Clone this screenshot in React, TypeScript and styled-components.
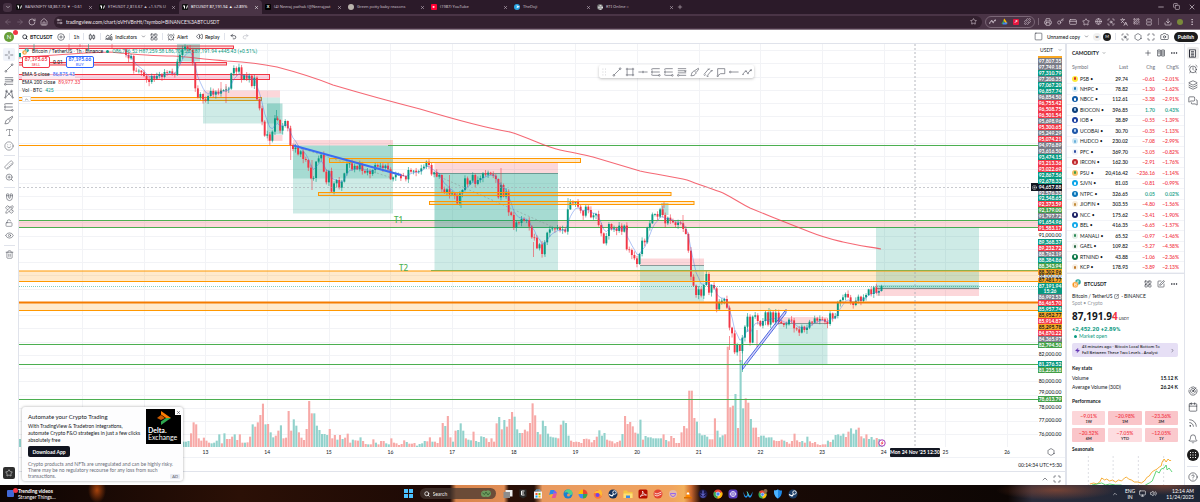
import React from 'react';
import styled, { createGlobalStyle, css } from 'styled-components';
import {
  AlarmClock, ArrowLeft, ArrowRight, Bell, Calendar, Camera, ChevronDown, ChevronRight, ChevronUp, CirclePlus,
  CircleHelp, CreditCard, Download, Ellipsis, EllipsisVertical, Eye, Hexagon, House, Key, Languages,
  Layers, LayoutGrid, LockOpen, Magnet, Maximize, MessagesSquare, Minus, PencilRuler, Plus, Puzzle, QrCode, Radar, Redo2,
  Rewind, RotateCw, Rss, Ruler, Search, Settings2, Smile, Square, SquareArrowOutUpRight, SquarePen, Star, Trash2, Type, Undo2,
  Volume2, X, ZoomIn, Zap, Globe, Printer, SquareSplitVertical, Copy, Monitor, ScanSearch,
} from 'lucide-react';

const UP = '#089981';
const DOWN = '#f23645';
const INK = '#131722';

const GlobalStyle = createGlobalStyle`
  * { box-sizing: border-box; }
  body { margin: 0; background: #fff; }
  body, button, input, table { font: 5px/6px Lato, Roboto, "Noto Sans", sans-serif; color: ${INK}; }
  button { background: none; border: 0; padding: 0; }
  svg { display: block; flex: none; }
  a { color: inherit; text-decoration: none; }
  h2, h3, p { margin: 0; }
`;

const Page = styled.div`
  min-height: 100vh;
  display: flex;
  flex-direction: column;
`;

/* ---------- browser chrome ---------- */

const TabStrip = styled.div`
  height: 14px;
  padding-left: 3px;
  display: flex;
  align-items: center;
  background: #2b1a29;
  color: #ddd0da;
`;

const TabMenu = styled.button`
  width: 9px;
  height: 9px;
  margin-right: 1px;
  border-radius: 3px;
  display: grid;
  place-items: center;
  background: #453142;
  color: #eee;
`;

const Tab = styled.button<{ $active?: boolean }>`
  width: 83px;
  height: 14px;
  padding: 0 3px;
  display: flex;
  align-items: center;
  gap: 3px;
  border-radius: 4px 4px 0 0;
  color: ${p => (p.$active ? '#fff' : '#cfc2cc')};
  background: ${p => (p.$active ? '#4a3446' : 'transparent')};
`;

const TabTitle = styled.span`
  flex: 1;
  min-width: 0;
  white-space: nowrap;
  text-align: left;
  font: 4px/6px "Noto Sans", sans-serif;
`;

const Favicon = styled.span<{ $bg: string; $round?: boolean }>`
  width: 6px;
  height: 6px;
  flex: none;
  display: grid;
  place-items: center;
  border-radius: ${p => (p.$round ? '50%' : '1px')};
  background: ${p => p.$bg};
  color: #fff;
  font-size: 4px;
  font-weight: 700;
`;

const Spacer = styled.div`
  flex: 1;
`;

const WindowButtons = styled.div`
  display: flex;
  gap: 8px;
  padding-right: 4px;
`;

const AddressRow = styled.div`
  height: 16px;
  padding: 0 4px;
  display: flex;
  align-items: center;
  background: #4a3446;
  color: #ddd0da;
  border-bottom: 1px solid #8a7a86;
`;

const NavButtons = styled.div`
  display: flex;
  gap: 4px;
  width: 50px;
`;

const UrlPill = styled.div`
  flex: 1;
  height: 12px;
  padding: 0 5px 0 2px;
  display: flex;
  align-items: center;
  gap: 3px;
  border-radius: 6px;
  background: #33202f;
`;

const UrlInput = styled.input`
  flex: 1;
  min-width: 0;
  padding: 0;
  border: 0;
  background: none;
  color: #eee5ec;
  outline: 0;
`;

const Pinned = styled.div`
  height: 12px;
  margin: 0 3px 0 3px;
  padding: 0 3px;
  display: flex;
  align-items: center;
  gap: 5px;
  border: 1px solid #7a6676;
  border-radius: 6px;
`;

const Extensions = styled.div`
  display: flex;
  align-items: center;
  gap: 5px;
`;

const Divider = styled.span<{ $color?: string }>`
  width: 1px;
  height: 7px;
  flex: none;
  background: ${p => p.$color || '#e0e3eb'};
`;

/* ---------- chart top bar ---------- */

const TopBar = styled.header`
  height: 14px;
  padding: 0 2px 0 4px;
  display: flex;
  align-items: center;
  background: #fff;
  border-bottom: 1px solid #e0e3eb;
`;

const TopGroup = styled.div<{ $gap: number }>`
  margin-right: 4px;
  display: flex;
  align-items: center;
  gap: ${p => p.$gap}px;
  &:last-child { margin-right: 0; }
`;

const BarButton = styled.button<{ $strong?: boolean; $muted?: boolean }>`
  display: flex;
  align-items: center;
  gap: 2px;
  font-weight: ${p => (p.$strong ? 700 : 500)};
  color: ${p => (p.$muted ? '#b2b5be' : INK)};
  white-space: nowrap;
`;

const Avatar = styled.button`
  position: relative;
  width: 10px;
  height: 10px;
  margin-right: 8px;
  border-radius: 50%;
  background: #689f38;
  color: #fff;
  font-size: 6px;
`;

const Badge = styled.span`
  position: absolute;
  top: -2px;
  right: -4px;
  width: 5px;
  height: 5px;
  border-radius: 50%;
  background: ${DOWN};
`;

const Dot = styled.span<{ $dark?: boolean }>`
  width: 8px;
  height: 8px;
  display: grid;
  place-items: center;
  border-radius: 50%;
  font-size: 4px;
  background: ${p => (p.$dark ? '#1c1c1c' : '#f0f0f0')};
  color: ${p => (p.$dark ? '#fff' : '#333')};
`;

const Publish = styled.button`
  width: 24px;
  height: 10px;
  border-radius: 5px;
  background: #1c1c1c;
  color: #fff;
  font-weight: 700;
`;

/* ---------- workspace ---------- */

const Workspace = styled.main`
  flex: 1;
  display: flex;
`;

const ToolRail = styled.nav`
  width: 19px;
  padding: 4px 0 6px;
  display: flex;
  flex-direction: column;
  align-items: center;
  border-right: 1px solid #e0e3eb;
`;

const Tool = styled.button<{ $active?: boolean }>`
  width: 12px;
  height: 13px;
  flex: none;
  display: grid;
  place-items: center;
  border-radius: 2px;
  color: #50535e;
  ${p => p.$active && css`background: #f0f3fa;`}
`;

const RailRule = styled.hr`
  width: 11px;
  height: 1px;
  flex: none;
  margin: 3px 0 2px;
  border: 0;
  background: #e0e3eb;
`;

const StarButton = styled.button`
  width: 12px;
  height: 12px;
  margin-top: auto;
  border-radius: 2px;
  display: grid;
  place-items: center;
  background: #2e2e2e;
  color: #fff;
`;

const ChartColumn = styled.section`
  flex: 1;
  min-width: 0;
  position: relative;
  display: flex;
  flex-direction: column;
  border-right: 2px solid #e0e3eb;
`;

const PlotRow = styled.div`
  display: flex;
  height: 413px;
`;

const Plot = styled.div`
  flex: 1;
  min-width: 0;
  position: relative;
  overflow: hidden;
`;

const PlotSvg = styled.svg`
  width: 100%;
  height: 413px;
  font-family: Lato, Roboto, sans-serif;
`;

const Axis = styled.div`
  width: 27px;
  display: flex;
  flex-direction: column;
`;

const Currency = styled.button`
  width: 24px;
  height: 12px;
  display: flex;
  align-items: center;
  justify-content: space-between;
  padding: 0 0 0 2px;
`;

const Price = styled.span<{ $bg?: string; $h: number; $dark?: boolean }>`
  width: 24px;
  height: ${p => p.$h}px;
  flex: none;
  display: flex;
  flex-direction: column;
  align-items: center;
  justify-content: center;
  line-height: 5px;
  font-weight: ${p => (p.$bg ? 700 : 500)};
  color: ${p => (p.$bg && !p.$dark ? '#fff' : INK)};
  background: ${p => p.$bg || 'transparent'};
`;

const AxisGear = styled.button`
  margin: auto 9px 1px;
`;

const ClockRow = styled.div`
  height: 15px;
  padding-right: 3px;
  display: flex;
  align-items: center;
  justify-content: flex-end;
  border-top: 1px solid #f0f2f6;
  border-bottom: 1px solid #e0e3eb;
`;

const PanelRow = styled.div`
  flex: 1;
  min-height: 13px;
  padding-right: 4px;
  display: flex;
  align-items: center;
  justify-content: flex-end;
  gap: 4px;
`;

/* ---------- overlays on the plot ---------- */

const Legend = styled.div`
  position: absolute;
  left: 3px;
  top: 3px;
  display: flex;
  flex-direction: column;
  align-items: flex-start;
  font-family: Roboto, sans-serif;
`;

const LegendRow = styled.div<{ $h: number; $veil?: boolean }>`
  height: ${p => p.$h}px;
  display: flex;
  align-items: center;
  gap: 3px;
  white-space: nowrap;
  background: ${p => (p.$veil ? 'rgba(255, 255, 255, 0.6)' : 'none')};
`;

const Tinted = styled.span<{ $color: string }>`
  color: ${p => p.$color};
`;

const Quote = styled.button<{ $color: string }>`
  width: 28px;
  height: 12px;
  border: 1px solid ${p => p.$color};
  border-radius: 2px;
  background: #fff;
  color: ${p => p.$color};
  font-weight: 700;
  line-height: 5px;
`;

const Side = styled.span`
  display: block;
  font-size: 4px;
  font-weight: 400;
`;

const Collapse = styled.button`
  width: 9px;
  height: 6px;
  border: 1px solid #e0e3eb;
  border-radius: 1px;
  background: #fff;
  display: grid;
  place-items: center;
`;

const FloatBar = styled.div`
  position: absolute;
  right: 284px;
  top: 21px;
  height: 13px;
  padding-right: 2px;
  display: flex;
  align-items: center;
  gap: 3px;
  border-radius: 2px;
  background: #fff;
  color: #50535e;
  box-shadow: 0 1px 3px rgba(0, 0, 0, 0.25);
`;

const CrossAdd = styled.button`
  position: absolute;
  right: 0;
  top: 139px;
  width: 7px;
  height: 8px;
  background: ${INK};
  color: #fff;
  display: grid;
  place-items: center;
`;

const AdCard = styled.aside`
  position: absolute;
  left: 3px;
  bottom: 4px;
  width: 161px;
  height: 74px;
  padding: 2px 2px 2px 6px;
  display: flex;
  flex-direction: column;
  border-radius: 3px;
  background: #fdfdfe;
  box-shadow: 0 0 3px rgba(0, 0, 0, 0.35);
`;

const AdTop = styled.div`
  display: flex;
  justify-content: space-between;
`;

const AdTitle = styled.h2`
  padding-top: 4px;
  margin-bottom: 3px;
  font-size: 6px;
  line-height: 7px;
  font-weight: 400;
`;

const AdText = styled.p<{ $muted?: boolean }>`
  line-height: ${p => (p.$muted ? 6 : 7)}px;
  color: ${p => (p.$muted ? '#6a6d78' : INK)};
  white-space: nowrap;
`;

const DownloadButton = styled.button`
  width: 42px;
  height: 11px;
  margin: 2px 0 4px;
  flex: none;
  border-radius: 2px;
  background: #10131f;
  color: #fff;
  font-weight: 700;
`;

const AdLogo = styled.div`
  position: relative;
  width: 35px;
  height: 35px;
  padding: 1px 2px;
  display: flex;
  flex-direction: column;
  background: #000;
  color: #fff;
  font-size: 7px;
  line-height: 7px;
`;

const AdLogoMark = styled.svg`
  align-self: center;
  margin-bottom: 1px;
`;

const AdClose = styled.button`
  position: absolute;
  top: 0;
  right: 0;
  width: 6px;
  height: 6px;
  display: grid;
  place-items: center;
  background: #fff;
`;

const AdTag = styled.span`
  position: absolute;
  right: 3px;
  bottom: 2px;
  padding: 0 2px;
  border-radius: 1px;
  background: #e8ebf3;
  color: #50535e;
  font-size: 4px;
  line-height: 5px;
`;

/* ---------- watch list and details ---------- */

const SidePanel = styled.aside`
  width: 118px;
  display: flex;
  flex-direction: column;
  border-right: 1px solid #e0e3eb;
`;

const PanelHead = styled.div`
  height: 18px;
  padding: 0 6px 0 5px;
  display: flex;
  align-items: center;
  gap: 5px;
`;

const PanelTitle = styled.h2`
  flex: 1;
  display: flex;
  align-items: center;
  gap: 3px;
  font-size: 5px;
  font-weight: 700;
`;

const WatchTable = styled.table`
  width: 100%;
  height: 211px;
  table-layout: fixed;
  border-collapse: collapse;
`;

const HeadCell = styled.th<{ $w?: number; $left?: boolean }>`
  width: ${p => (p.$w ? `${p.$w}px` : 'auto')};
  height: 12px;
  padding: 0 0 2px ${p => (p.$left ? 5 : 0)}px;
  text-align: ${p => (p.$left ? 'left' : 'right')};
  font-weight: 400;
  color: #6a6d78;
  &:last-child { padding-right: 5px; }
`;

const Cell = styled.td<{ $color?: string }>`
  padding: 0;
  text-align: right;
  font-weight: 600;
  color: ${p => p.$color || INK};
  white-space: nowrap;
  border-bottom: 1px solid #f3f4f8;
  &:last-child { padding-right: 5px; }
`;

const NameCell = styled.td`
  padding: 0 0 0 5px;
  border-bottom: 1px solid #f3f4f8;
`;

const NameWrap = styled.span`
  display: flex;
  align-items: center;
  gap: 2px;
  white-space: nowrap;
`;

const Coin = styled.span<{ $bg: string; $fg: string }>`
  width: 6px;
  height: 6px;
  flex: none;
  border-radius: 50%;
  display: grid;
  place-items: center;
  background: ${p => p.$bg};
  &::after {
    content: '';
    width: 2px;
    height: 3px;
    border-radius: 1px;
    background: ${p => p.$fg};
  }
`;

const Details = styled.section`
  padding: 0 6px 0 5px;
  border-top: 1px solid #e0e3eb;
  flex: 1;
  display: flex;
  flex-direction: column;
`;

const DetailHead = styled.div`
  height: 19px;
  display: flex;
  align-items: center;
  gap: 5px;
`;

const Line = styled.div<{ $h: number; $muted?: boolean }>`
  height: ${p => p.$h}px;
  display: flex;
  align-items: center;
  gap: 2px;
  white-space: nowrap;
  color: ${p => (p.$muted ? '#9598a1' : INK)};
`;

const BigPrice = styled.div`
  height: 18px;
  display: flex;
  align-items: center;
  font: 700 10px/18px "Noto Sans", sans-serif;
`;

const Unit = styled.span`
  margin: 5px 0 0 1px;
  font: 4px/5px Lato, sans-serif;
`;

const Change = styled.div`
  height: 7px;
  color: ${UP};
  font: 700 6px/7px Roboto, sans-serif;
`;

const Open = styled.div`
  height: 8px;
  padding-left: 2px;
  display: flex;
  align-items: center;
  gap: 2px;
  color: ${UP};
`;

const OpenDot = styled.span`
  width: 3px;
  height: 3px;
  border-radius: 50%;
  background: ${UP};
`;

const News = styled.a`
  height: 14px;
  margin: 3px 0 7px;
  padding: 0 3px;
  display: flex;
  align-items: center;
  gap: 2px;
  border-radius: 2px;
  background: #e6dff5;
  white-space: nowrap;
`;

const NewsText = styled.span`
  flex: 1;
  font: 500 4px/6px "Noto Sans", sans-serif;
`;

const SubTitle = styled.h3<{ $h: number }>`
  font-size: 5px;
  line-height: ${p => p.$h}px;
  font-weight: 700;
`;

const Stat = styled.div`
  height: 9px;
  display: flex;
  align-items: center;
  justify-content: space-between;
`;

const PerfGrid = styled.div`
  display: grid;
  grid-template-columns: repeat(3, 1fr);
  grid-auto-rows: 14px;
  gap: 3px;
`;

const PerfCell = styled.div<{ $bg: string }>`
  display: flex;
  flex-direction: column;
  align-items: center;
  justify-content: center;
  border-radius: 1px;
  background: ${p => p.$bg};
  color: ${DOWN};
  font-weight: 600;
`;

const Period = styled.span`
  color: ${INK};
  font-size: 4px;
  line-height: 5px;
`;

const IconRail = styled.nav`
  width: 15px;
  padding-top: 3px;
  display: flex;
  flex-direction: column;
  align-items: center;
  color: #50535e;
`;

const RailButton = styled.button<{ $tone?: 'on' | 'dark' }>`
  width: 12px;
  height: ${p => (p.$tone ? 12 : 16)}px;
  margin: ${p => (p.$tone ? 2 : 0)}px 0;
  flex: none;
  display: grid;
  place-items: center;
  border-radius: ${p => (p.$tone === 'dark' ? '50%' : '2px')};
  ${p => p.$tone === 'on' && css`background: #ebebeb; margin-top: 0;`}
  ${p => p.$tone === 'dark' && css`background: #1c1c1c; color: #fff;`}
`;

/* ---------- taskbar ---------- */

const Taskbar = styled.footer`
  height: 17px;
  padding: 0 6px 0 7px;
  display: grid;
  grid-template-columns: 1fr auto 1fr;
  align-items: center;
  color: #fff;
  background:
    radial-gradient(ellipse 9px 13px at 97px 5px, #a8430c, transparent),
    radial-gradient(ellipse 60px 10px at 88% 30%, rgba(190, 90, 50, 0.5), transparent),
    radial-gradient(ellipse 40px 10px at 97% 0, rgba(190, 90, 50, 0.5), transparent),
    linear-gradient(90deg, #0c0403 0, #2b1006 20%, #1c0905 37.5%, #d9854c 38%, #e08d55 42%, #2a0f06 42.4%, #241009 44.5%,
      #e8995f 45.2%, #f0a45f 56%, #f2b05c 57%, #c9662e 57.6%, #1c0b06 58.4%, #0d0604 84%, #2a2b3a 86%, #1d2636 100%);
`;

const TaskApps = styled.div`
  display: flex;
  align-items: center;
  gap: 5px;
`;

const TaskSearch = styled.label`
  width: 76px;
  height: 11px;
  margin: 0 2px;
  padding: 0 4px;
  display: flex;
  align-items: center;
  gap: 3px;
  border-radius: 6px;
  background: rgba(70, 55, 48, 0.75);
`;

const SearchInput = styled.input`
  width: 40px;
  flex: 1;
  padding: 0;
  border: 0;
  background: none;
  color: #fff;
  outline: 0;
  &::placeholder { color: #eee; opacity: 1; }
`;

const Trend = styled.button`
  display: flex;
  align-items: center;
  gap: 4px;
  color: #fff;
  text-align: left;
`;

const TrendIcon = styled.span`
  position: relative;
  width: 7px;
  height: 7px;
  border-radius: 1px;
  background: #4169d8;
`;

const Tray = styled.div`
  display: flex;
  align-items: center;
  justify-content: flex-end;
  gap: 4px;
`;

const TrayText = styled.span<{ $center?: boolean }>`
  text-align: ${p => (p.$center ? 'center' : 'right')};
  padding-left: ${p => (p.$center ? 3 : 5)}px;
`;

/* ---------- chart data ---------- */

const STEP = 2.57;

// Candle closes in thirds of a chart unit below each run's base line.
const RUNS: { x: number; base: number; open: number; closes: number[] }[] = [
  { x: 126, base: 0, open: 148, closes: [165, 175, 168, 212, 214, 212, 217, 228, 240, 246, 228, 236, 228, 222, 231, 216, 218, 214, 221, 222] },
  { x: 177.3, base: 40, open: 105, closes: [65, 45, 28, 20, 25, 30, 70, 145, 172, 162, 178, 182, 168, 153, 164, 155, 161, 152, 150, 148, 146, 100, 84, 95, 82, 118, 106, 116, 107, 138, 113, 178, 205, 245, 287, 283, 302, 275, 235, 240, 272, 258, 243, 265, 315, 327, 323, 343, 334, 357, 360, 383, 415, 414, 365, 355, 345, 395, 427, 393, 455, 430, 420, 443, 425, 400, 372, 370, 388, 378, 388, 372, 393, 398, 393, 402, 390, 375, 380, 377, 384, 377, 388, 418, 412, 404, 403, 415] },
  { x: 403.3, base: 140, open: 105, closes: [108, 118, 90, 95, 92, 96, 94, 85, 80, 65, 75, 103, 97, 110, 105, 148, 158, 148, 163, 160, 168, 190, 160, 150, 115, 133, 122, 105, 132, 120, 114, 100, 104, 98, 103, 107, 117, 172, 135, 170, 155, 217, 225, 262, 247, 249, 237, 242, 240, 260, 292, 293, 325, 313, 342, 307, 278, 268, 265, 268, 263, 270, 268, 275, 208, 187, 190, 186, 200, 212, 227, 200, 210, 232, 226, 222, 255, 280, 310, 288, 252, 268, 265, 273, 257, 275, 257, 270] },
  { x: 626.7, base: 180, open: 138, closes: [208, 210, 225, 235, 252, 222, 182, 187, 143, 130, 103, 102, 110, 88, 105, 130, 113, 122, 127, 135, 128, 130, 147, 162, 212, 290, 317, 345, 328, 347, 315, 282, 338, 315, 325, 388, 368, 362, 357, 383, 443, 460, 517, 495, 513, 473, 440, 410, 488, 410, 406, 423, 437, 423, 397, 434, 397, 427, 398] },
  { x: 778.7, base: 210, open: 308, closes: [335, 340, 345, 343, 329, 331, 355, 358, 368, 350, 360, 353, 335, 338, 325, 332, 327, 328, 335, 342, 310, 325, 318, 278, 270, 262, 252, 262, 278, 285, 272, 260, 273, 262, 255, 238, 252, 232, 248, 243, 228] },
];

type Candle = { x: number; open: number; close: number; high: number; low: number };

const candles: Candle[] = RUNS.flatMap(run => {
  let open = run.base + run.open / 3;
  return run.closes.map((c, i) => {
    const close = run.base + c / 3;
    const n = Math.round(run.x) + i;
    const candle = {
      x: run.x + i * STEP,
      open,
      close,
      high: Math.min(open, close) - 0.6 - ((n * 7) % 11) * 0.3,
      low: Math.max(open, close) + 0.6 + ((n * 5) % 13) * 0.3,
    };
    open = close;
    return candle;
  });
});

const emaPath = (() => {
  let v = candles[0].close;
  return candles.map((c, i) => {
    v += (c.close - v) / 3;
    return `${i ? 'L' : 'M'}${c.x.toFixed(1)} ${v.toFixed(1)}`;
  }).join('');
})();

// Volume bar heights in thirds of a chart unit, one per hour.
const VOLUMES = [
  16, 16, 18, 41, 74, 68, 26, 19, 28, 19, 13, 11, 13, 19, 38, 11, 41, 24, 24, 31, 38, 21, 38, 13, 13, 14, 31, 68, 61, 74, 96, 130, 68, 69, 44, 29, 34, 49, 65, 26, 28, 108, 49, 83, 64, 44, 28, 21, 54, 138, 101, 101, 64, 51, 39, 39, 36, 54, 26, 36, 22, 36, 24, 28, 40, 13, 22, 20, 19, 29, 18, 9, 8, 8, 23, 13, 8, 18, 18, 11, 8, 26, 13, 11,
  6, 9, 20, 15, 10, 10, 12, 4, 9, 11, 18, 17, 29, 16, 16, 12, 29, 72, 63, 93, 29, 16, 49, 51, 71, 49, 26, 22, 20, 46, 18, 15, 32, 30, 26, 15, 26, 16, 71, 90, 53, 81, 61, 84, 105, 91, 53, 42, 42, 52, 47, 72, 131, 95, 45, 38, 79, 63, 40, 31, 29, 28, 26, 67, 79, 72, 34, 19, 15, 16, 15, 12, 24, 25, 23, 14, 21, 31, 50, 34, 42, 22, 19, 17, 11, 15, 19, 39, 93, 69, 75, 62, 43, 40, 82, 22, 33, 29, 29, 26, 26, 26, 26, 38, 21, 17, 33, 27, 12, 12, 44, 63, 56, 169, 169, 87, 76, 41, 35, 36, 31, 23, 23, 86, 49, 29, 35, 38, 301, 119, 124, 159, 57, 261, 116, 146, 133, 84, 58, 58, 30, 34, 34, 28, 29, 29, 20, 18, 18, 22, 19, 15, 10, 18, 40, 20, 15, 18, 13, 31, 17, 12, 15, 8, 6, 8, 8, 19, 15, 22, 36, 38,
  34, 40, 30, 46, 56, 40, 52, 58, 32, 26, 38, 24, 30, 22, 27, 24, 14,
];

// Inclusive index ranges of the hours that closed higher.
const RISING = [
  [0, 2], [11, 14], [16, 16], [20, 20], [24, 24], [27, 27], [32, 32], [34, 35], [38, 38], [43, 44], [51, 56], [60, 60], [62, 62], [66, 66],
  [69, 69], [72, 72], [75, 75], [79, 80], [87, 87], [91, 94], [97, 97], [102, 102], [105, 105], [107, 109], [111, 112], [114, 117],
  [123, 123], [125, 125], [129, 131], [138, 138], [140, 145], [148, 150], [162, 164], [171, 171], [177, 178], [180, 186], [188, 188],
  [200, 204], [208, 210], [215, 215], [217, 218], [221, 221], [225, 229], [234, 234], [241, 241], [243, 243], [251, 251], [253, 257],
  [260, 262], [265, 265], [267, 269], [271, 272],
];

const volumes = VOLUMES.map((h, i) => ({
  x: 183.3 + i * 2.568,
  h: h / 3,
  up: RISING.some(([a, b]) => i >= a && i <= b),
}));

const DAYS = Array.from({ length: 14 }, (_, i) => ({ x: 205.5 + i * 61.66, label: String(13 + i) }));

const Zone = ({ x, y, r, b, fill, o = 0.2, stroke }: { x: number; y: number; r: number; b: number; fill: string; o?: number; stroke?: string }) => (
  <rect x={x} y={y} width={r - x} height={b - y} fill={fill} fillOpacity={o} stroke={stroke} strokeWidth={stroke ? 1 : 0} />
);

const Level = ({ y, x = 19, color, w = 1, dash }: { y: number; x?: number; color: string; w?: number; dash?: string }) => (
  <path d={`M${x} ${y}H1038`} stroke={color} strokeWidth={w} strokeDasharray={dash} />
);

const GREEN = '#4caf50';
const ORANGE = '#ff9800';

const PriceChart = () => (
  <PlotSvg viewBox="19 44 1019 413" preserveAspectRatio="xMaxYMin slice" fill="none" role="img" aria-label="BTCUSDT hourly candles">
    <g stroke="#f2f3f6" strokeWidth={1}>
      {Array.from({ length: 16 }, (_, i) => <path key={i} d={`M${82.5 + Math.round(i * 61.66)} 44V447`} />)}
      {Array.from({ length: 30 }, (_, i) => <path key={i} d={`M19 ${50.5 + Math.round(i * 13.25)}H1038`} />)}
    </g>
    {volumes.map((v, i) => (
      <rect key={i} x={v.x - 1} y={447 - v.h} width={2.1} height={v.h} fill={v.up ? '#92d2cc' : '#f7a9a7'} />
    ))}
    <rect x={19} y={439} width={2} height={8} fill="#92d2cc" />

    <Zone x={10} y={46} r={233.5} b={48.5} fill={DOWN} stroke={DOWN} />
    <Zone x={10} y={62.5} r={226.5} b={65} fill={DOWN} stroke={DOWN} />
    <Zone x={10} y={74.5} r={269.5} b={79.5} fill="#e91e63" stroke={DOWN} />
    <Zone x={177} y={44} r={200} b={61.5} fill={UP} o={0.28} />
    <Zone x={10} y={97.5} r={261.5} b={100.5} fill={ORANGE} stroke={ORANGE} />
    <Zone x={203} y={90.5} r={280} b={97.5} fill={DOWN} />
    <Zone x={203} y={97.5} r={280} b={123.5} fill={UP} />
    <Zone x={267} y={103.5} r={282.5} b={134.5} fill={UP} o={0.3} />
    <Zone x={267} y={135} r={282.5} b={141} fill={DOWN} />
    <path d="M19 145.5H293" stroke={ORANGE} />
    <Zone x={293} y={140} r={393} b={145.5} fill={DOWN} />
    <Zone x={293} y={145.5} r={393} b={213.5} fill={UP} />
    <Zone x={293} y={145.5} r={393} b={178.5} fill={UP} />
    <Level x={388} y={145.5} color={GREEN} />

    <Zone x={19} y={220.5} r={1038} b={227.5} fill={DOWN} />
    <Zone x={19} y={271} r={1038} b={282} fill={ORANGE} />
    <Zone x={19} y={303} r={1038} b={311} fill={ORANGE} />
    <Level y={220.5} color={GREEN} />
    <Level y={227.5} color={GREEN} />
    <Zone x={434.5} y={163} r={558} b={173.5} fill={DOWN} />
    <Zone x={434.5} y={173.5} r={558} b={270.5} fill={UP} />
    <Zone x={434.5} y={173.5} r={558} b={228} fill={UP} />
    <path d="M434 173.5H558" stroke="#6a9b94" />
    <path d="M440 177L553 227M297 147L392 178" stroke="#8a9a98" strokeWidth={0.6} strokeDasharray="2 2" />
    <Zone x={640} y={258.5} r={704} b={265.5} fill={DOWN} />
    <Zone x={640} y={265.5} r={704} b={301.5} fill={UP} />
    <path d="M640 265.5H704" stroke="#8a9a98" />
    <Zone x={661} y={203} r={668.5} b={215} fill={UP} o={0.3} />
    <Zone x={778.5} y={317} r={827.5} b={323.5} fill={DOWN} />
    <Zone x={778.5} y={323.5} r={827.5} b={364.5} fill={UP} />
    <path d="M778 323.5H827" stroke="#8a9a98" />
    <Zone x={876} y={227.5} r={979} b={289} fill={UP} />
    <Zone x={876} y={285} r={979} b={289} fill={UP} />
    <Zone x={876} y={289} r={979} b={296} fill={DOWN} />
    <path d="M876 288.5H979" stroke="#7d8a88" />

    <path d="M19 58C50 55 85 53 110 52C130 54 160 56 173 56C190 57 200 59 227 61C250 62 262 64 277 67C300 73 318 79 333 85C360 93 385 100 420 109C450 118 480 127 510 132C530 138 545 147 560 150C575 153 585 155 593 157L640 171C660 175 675 177 687 180C700 185 713 189 723 193C735 199 740 203 750 208L772 217L810 232C825 238 835 240 843 242C855 245 870 247 881 249" stroke={DOWN} strokeOpacity={0.75} strokeWidth={1.1} />

    {candles.map((c, i) => {
      const color = c.close <= c.open ? UP : DOWN;
      const top = Math.min(c.open, c.close);
      return (
        <g key={i}>
          <path d={`M${c.x} ${c.high}V${c.low}`} stroke={color} strokeWidth={0.6} />
          <rect x={c.x - 0.95} y={top} width={1.9} height={Math.max(0.8, Math.abs(c.close - c.open))} fill={color} />
        </g>
      );
    })}
    {/* the longest wicks */}
    <g strokeWidth={0.7} strokeOpacity={0.8}>
      <path d="M69 44v6M80 44v3M112 44v5M226 84V103M290.700 126V160M221 82v10M312 160v30M729.5 336V350M740 352V362M449.500 175v20M501 168v20M664 208v-6M683 215v12M757 330v17M533.500 242v15" stroke={DOWN} />
      <path d="M34 44v6M88.500 44v7M276.500 110V120M742.500 345V372M461 195v13M568 198V208M747.500 318v14M769 308v14M545 245v12" stroke={UP} />
    </g>
    <rect x={19} y={53} width={2} height={4} fill={UP} />
    <path d={emaPath} stroke="#3f6fe8" strokeOpacity={0.6} strokeWidth={0.7} />

    <Zone x={329.5} y={158.5} r={580.5} b={162.5} fill={ORANGE} stroke={ORANGE} />
    <Zone x={318.5} y={192.5} r={671} b={195.5} fill={ORANGE} stroke={ORANGE} />
    <Zone x={429.5} y={201.5} r={694} b={204.5} fill={ORANGE} stroke={ORANGE} />
    <path d="M293.500 145.500L401 175" stroke="#3b6cf0" strokeWidth={2} />
    <path d="M742.500 369.500L786 313V309.500L742.500 366Z" fill="#7b68ee" fillOpacity={0.3} stroke="#3b5bdb" strokeWidth={0.9} />

    <Level y={271} color={ORANGE} />
    <Level x={431} y={270.5} color="#8fb04a" />
    <Level y={281.5} color={ORANGE} />
    <Level y={286.5} color={UP} dash="1 1" w={0.5} />
    <Level y={302.5} color="#f57c00" w={2} />
    <Level y={310.5} color={ORANGE} />
    <Level y={344.5} color={GREEN} />
    <Level y={364.5} color={GREEN} />
    <Level y={399.5} color={GREEN} />
    <Level y={187.5} color="#a3a6af" w={0.6} dash="2 2" />
    <path d="M915 44V447" stroke="#a3a6af" strokeWidth={0.8} strokeDasharray="2 2" />

    <g fill={GREEN} fontSize={8} fontFamily="Noto Sans" fontWeight={500}>
      <text x={394} y={223}>T1</text>
      <text x={399} y={271}>T2</text>
    </g>
    <circle cx={882} cy={443} r={3.2} fill="#fff" stroke="#9c27b0" strokeWidth={0.9} />
    <path d="M883 440.800L880.500 443.500H882L881.300 445.300L883.700 442.700H882.300Z" fill={DOWN} />

    <g fill={INK} fontSize={5} textAnchor="middle">
      {DAYS.map(d => <text key={d.label} x={d.x} y={454}>{d.label}</text>)}
      <rect x={890} y={448} width={50} height={9} rx={1} fill={INK} />
      <text x={915} y={454} fill="#fff" fontWeight={700}>Mon 24 Nov '25 12:30</text>
    </g>
  </PlotSvg>
);

/* ---------- small drawings ---------- */

const Glyph = ({ d, size = 10, w = 1.3 }: { d: string; size?: number; w?: number }) => (
  <svg width={size} height={size} viewBox="0 0 24 24" fill="none" stroke="currentColor" strokeWidth={w} strokeLinejoin="round">
    <path d={d} />
  </svg>
);

const G = {
  cross: 'M12 2v7M12 15v7M2 12h7M15 12h7M11.500 12h1',
  trend: 'M5.500 18.500L18.500 5.500M2.500 20a2 2 0 1 0 4 0a2 2 0 1 0-4 0M17.500 4a2 2 0 1 0 4 0a2 2 0 1 0-4 0',
  fib: 'M2 4h20M2 9h20M2 14h20M5 20h17M1 20a2 2 0 1 0 4 0a2 2 0 1 0-4 0M18 9a2 2 0 1 0 4 0',
  pattern: 'M3 20L6 5L12 12L18 5L21 20M3 20L12 12L21 20M4 5a2 2 0 1 0 4 0a2 2 0 1 0-4 0M16 5a2 2 0 1 0 4 0a2 2 0 1 0-4 0M1 20a2 2 0 1 0 4 0M19 20a2 2 0 1 0 4 0',
  position: 'M3 4h18M6 12h15M3 20h15M2 4v4M1 12a2 2 0 1 0 4 0a2 2 0 1 0-4 0M18 20a2 2 0 1 0 4 0a2 2 0 1 0-4 0M2 16v4',
  brush: 'M2 21C4 20 3 15 6 12L10 9L15 14L12 18C10 21 5 21 2 21ZM11 9L20 3L21 5L15 13',
  rect: 'M5 5h14v14H5ZM2 5h3V2M22 5h-3V2M2 19h3v3M22 19h-3v3',
  hline: 'M1 12h8M15 12h8M10 12a2 2 0 1 0 4 0a2 2 0 1 0-4 0',
  channel: 'M3 17L14 4M10 21L21 8M2 18a2 2 0 1 0 4 0M12 4a2 2 0 1 0 4 0M9 21a2 2 0 1 0 4 0M19 8a2 2 0 1 0 4 0',
  note: 'M4 4h17v12H11L4 21ZM2 21a2 2 0 1 0 4 0',
  ray: 'M5 12h18M1 12a2 2 0 1 0 4 0a2 2 0 1 0-4 0',
  zig: 'M2 17L9 9L14 15L22 6M1 17a1.500 1.500 0 1 0 3 0M8 9a1.500 1.500 0 1 0 3 0M13 15a1.500 1.500 0 1 0 3 0M20 6a2 2 0 1 0 3 0',
  candle: 'M7 2v4M7 18v4M4 6h6v12H4ZM17 4v4M17 16v4M14 8h6v8h-6Z',
  indicator: 'M2 13L8 6L13 10L21 3M3 21v-5h4v5M10 21v-7h4v7M17 21v-10h4v10Z',
  list: 'M4 2h16v20H4ZM4 2v20M8 7h8M8 11h8M8 15h8M8 19h8',
  columns: 'M2 3h8v18H2ZM14 3h8v18h-8ZM14 9h8M14 15h8M4 8h4M4 12h4',
};

const Delta = () => (
  <AdLogoMark width={16} height={16} viewBox="0 0 16 16">
    <path d="M5 1L15 8H10L5 4.500Z" fill="#fd7d02" />
    <path d="M1 8L5 5L9 8L5 10Z" fill="#c85a00" />
    <path d="M15 8L5 15V11.500L10 8Z" fill="#2fa84f" />
  </AdLogoMark>
);

const Seasonals = () => (
  <svg width="100%" height={29} viewBox="0 0 107 29" preserveAspectRatio="none" fill="none" aria-hidden>
    <path d="M16.500 0V29M41.500 0V29M67 0V29M92.500 0V29" stroke="#c5c8d0" strokeWidth={0.6} strokeDasharray="2 2" />
    <path d="M18 28L22 27L25 28L28 26L30 22L33 24L35 23L38 25L41 24L44 26L47 24L50 25L53 22L55 21L57 23L60 24L63 26L66 26L70 27L73 25L76 21L78 20L80 17L82 15L84 14L86 13L88 11L90 10L91 6L93 3L95 6L97 3L99 5L100 4" stroke="#f5a623" strokeWidth={0.9} />
    <path d="M20 29L25 28L30 27L34 29L38 28L44 29L50 29M74 29L78 27L81 25L83 20L85 15L88 17L90 13L93 12L95 9L96 14L98 12L101 16" stroke="#4fd06a" strokeWidth={0.9} />
  </svg>
);

const TabIcon = () => (
  <Favicon $bg="#111">
    <svg width={5} height={4} viewBox="0 0 10 8"><path d="M0 1h4v6H2V3H0ZM8 1h2L8 7H6Z" fill="#fff" /></svg>
  </Favicon>
);

const BtcMark = ({ size = 9 }: { size?: number }) => (
  <svg width={size} height={size} viewBox="0 0 18 18">
    <circle cx={12} cy={6} r={5.5} fill="#26a69a" />
    <path d="M9.500 4h5M12 4v5" stroke="#fff" strokeWidth={1.3} />
    <circle cx={6.5} cy={11.5} r={6} fill="#f7931a" stroke="#fff" strokeWidth={0.8} />
    <path d="M5 8.500h2.500a1.500 1.500 0 0 1 0 3H5ZM5 11.500h3a1.500 1.500 0 0 1 0 3H5Z" stroke="#fff" fill="none" strokeWidth={1.2} />
  </svg>
);

/* Taskbar program icons, each drawn in a 20x20 box. */
const APPS: React.ReactNode[] = [
  <g><rect x={5} y={2} width={14} height={13} fill="#eee" /><rect x={1} y={6} width={13} height={12} fill="#8c8c8c" /></g>,
  <g><path d="M3 1h14v14l-7 4l-7-4Z" fill="#2a2a2a" /><path d="M7 4h6M7 4v8M7 8h5M7 12h6" stroke="#fff" strokeWidth={1.8} /></g>,
  <g><path d="M2 5h16v14H2Z" fill="#f4f4f4" /><path d="M6 5V2h8v3" stroke="#5ab0e8" strokeWidth={2} fill="none" /><path d="M5 8h4v4H5Z" fill="#f35325" /><path d="M11 8h4v4h-4Z" fill="#81bc06" /><path d="M5 13h4v4H5Z" fill="#05a6f0" /><path d="M11 13h4v4h-4Z" fill="#ffba08" /></g>,
  <g><path d="M10 10L2 12L5 2H13Z" fill="#2a8be8" /><path d="M10 10L18 8L15 18H7Z" fill="#e8549a" /><path d="M2 12L10 10L7 18Z" fill="#f0b429" /><path d="M13 2L18 8L10 10Z" fill="#7a5af8" /></g>,
  <g><circle cx={10} cy={10} r={9} fill="#1b7fcf" /><path d="M3 8A8 8 0 0 1 19 10C17 13 13 13 12 10C10 6 5 6 3 8Z" fill="#4fd18b" /><circle cx={11} cy={12} r={3} fill="#e8995f" /></g>,
  <g><path d="M10 10V1A9 9 0 0 1 19 10Z" fill="#ea4335" /><path d="M10 10H19A9 9 0 0 1 10 19Z" fill="#34a853" /><path d="M10 10V19A9 9 0 0 1 1 10Z" fill="#4285f4" /><path d="M10 10H1A9 9 0 0 1 10 1Z" fill="#fbbc05" /></g>,
  <g><circle cx={10} cy={11} r={8.5} fill="#ff7139" /><path d="M2 8C5 2 10 5 14 1C19 5 20 12 15 17C17 10 12 7 2 8Z" fill="#ffbd2e" /><circle cx={9} cy={12} r={4} fill="#7542e5" /></g>,
  <g><circle cx={10} cy={10} r={9} fill="#16335b" /><circle cx={13} cy={7} r={3.5} fill="none" stroke="#fff" strokeWidth={1.8} /><path d="M2 11L8 14L11 10" stroke="#fff" strokeWidth={2.5} fill="none" /></g>,
  <g><path d="M1 3h7l2 3h9v12H1Z" fill="#f4c542" /><path d="M1 9h18v9H1Z" fill="#ffdf76" /><path d="M6 13h8v5H6Z" fill="#3b8be0" /></g>,
  <g><rect x={1} y={1} width={18} height={18} rx={3} fill="#b30b00" /><path d="M4 15C9 12 10 8 9 4C11 10 14 12 17 12C12 11 8 13 4 15Z" stroke="#fff" fill="none" strokeWidth={1.4} /></g>,
  <g><circle cx={10} cy={10} r={9} fill="#e44332" /><path d="M3 8l5 2l9-4M3 12l5 2l9-4" stroke="#fff" strokeWidth={1.5} fill="none" /></g>,
  <g><circle cx={10} cy={10} r={8} fill="#e5b9a8" /><path d="M5 9h10c0 8-10 8-10 0Z" fill="none" stroke="#8b5cf6" strokeWidth={1.8} /></g>,
  <g><path d="M10 1L15 16H5Z" fill="#ff8800" /><path d="M8 7h4l1 4H7Z" fill="#fff" /><path d="M2 16h16v3H2Z" fill="#d96f00" /></g>,
  <g><circle cx={10} cy={10} r={9} fill="#1b1746" /><path d="M10 3v10M6 9l4 4l4-4M5 14c2 3 8 3 10 0" stroke="#7c83ff" strokeWidth={1.8} fill="none" /></g>,
  <g><circle cx={10} cy={10} r={9} fill="#ea4335" /><path d="M10 10L2.500 5A9 9 0 0 0 9 19Z" fill="#34a853" /><path d="M10 10L18 6A9 9 0 0 1 9 19Z" fill="#fbbc05" /><circle cx={10} cy={10} r={4} fill="#4285f4" stroke="#fff" strokeWidth={1.2} /></g>,
  <g><rect x={1} y={1} width={18} height={18} rx={5} fill="#5b3fbf" /><circle cx={10} cy={10} r={5} fill="none" stroke="#fff" strokeWidth={1.6} /><path d="M3 10h14M10 5v10" stroke="#fff" strokeWidth={1.2} /></g>,
  <g><path d="M1 5c3 12 6 12 9 2c2 10 6 8 9-2c0 6-2 13-6 12c-2 0-2-2-3-4c-1 3-3 5-5 4C2 16 1 10 1 5Z" fill="#2196f3" /><path d="M8 5l4 9" stroke="#56d0b0" strokeWidth={2} /></g>,
  <g><circle cx={9} cy={11} r={8} fill="#34a853" /><path d="M9 11L2 6A8 8 0 0 1 16 8Z" fill="#ea4335" /><path d="M9 11L17 9A8 8 0 0 1 9 19Z" fill="#fbbc05" /><circle cx={9} cy={11} r={3.3} fill="#4285f4" stroke="#fff" /><circle cx={15} cy={4} r={4} fill="#8a6a4a" /></g>,
  <g><path d="M10 1C13 3 16 3 18 3C18 12 15 16 10 19C5 16 2 12 2 3C4 3 7 3 10 1Z" fill="#1e88e5" /><path d="M10 1V19C5 16 2 12 2 3C4 3 7 3 10 1Z" fill="#4db4ff" /></g>,
  <g><circle cx={10} cy={10} r={9} fill="#1a3c66" /><circle cx={13} cy={7} r={3.5} fill="none" stroke="#fff" strokeWidth={1.8} /><path d="M2 11L8 14L11 10" stroke="#fff" strokeWidth={2.5} fill="none" /></g>,
];

/* ---------- content ---------- */

const GREY = '#787b86';
const RED = DOWN;
const LEAF = '#43a047';
const AMBER = '#f9a825';

const PRICES: [string, string | null, number][] = [
  ['', AMBER, 2], ['97,807.35', GREY, 6], ['97,749.18', GREY, 6], ['97,310.79', UP, 6], ['97,206.35', GREY, 6], ['97,067.20', UP, 6],
  ['96,857.74', UP, 6], ['96,854.50', GREY, 6], ['96,755.42', RED, 6], ['96,508.75', RED, 6], ['96,501.54', RED, 6], ['95,698.96', GREY, 6],
  ['95,300.65', RED, 6], ['95,249.29', GREY, 6], ['95,074.21', RED, 6], ['94,976.89', GREY, 6], ['93,616.50', GREY, 6], ['93,474.15', UP, 6],
  ['93,213.36', RED, 6], ['93,022.69', RED, 6], ['92,867.56', UP, 6], ['92,678.33', UP, 6], ['94,657.88', INK, 7], ['92,576.33', GREY, 4],
  ['92,548.65', UP, 6], ['92,373.59', RED, 6], ['92,179.00', LEAF, 6], ['91,797.72', GREY, 6], ['91,654.96', UP, 6], ['91,583.17', RED, 6],
  ['91,000.00', null, 8], ['89,368.37', UP, 6], ['89,232.72', RED, 6], ['88,762.19', GREY, 6], ['88,384.86', UP, 6], ['88,343.94', LEAF, 6],
  ['88,302.96', AMBER, 6], ['88,000.00', null, 3], ['87,481.77', AMBER, 5], ['87,191.94', UP, 11], ['86,992.53', GREY, 6], ['86,465.70', RED, 6],
  ['85,957.74', UP, 6], ['85,952.77', AMBER, 6], ['85,914.87', RED, 6], ['85,295.78', AMBER, 6], ['84,870.22', RED, 6], ['84,365.97', GREY, 6],
  ['82,794.50', LEAF, 6], ['82,000.00', null, 13], ['81,276.52', UP, 6], ['81,235.18', LEAF, 6], ['80,000.00', null, 16], ['79,000.00', null, 7],
  ['78,613.79', LEAF, 6], ['78,000.00', null, 11], ['77,000.00', null, 15], ['76,000.00', null, 12],
];

const WATCH: [string, string, string, string, string, string][] = [
  ['PSB', '29.74', '−0.61', '−2.01%', '#ffeb3b', '#d32f2f'],
  ['NHPC', '78.82', '−1.30', '−1.62%', '#d6ebf7', '#2a7fb8'],
  ['NBCC', '112.61', '−3.38', '−2.91%', '#0d5aa7', '#ffffff'],
  ['BIOCON', '396.85', '1.70', '0.43%', '#0d3f7a', '#9cc4ee'],
  ['IOB', '38.89', '−0.55', '−1.39%', '#1a3fa0', '#ffffff'],
  ['UCOBAI', '30.70', '−0.35', '−1.13%', '#1e57a8', '#b8d4f5'],
  ['HUDCO', '230.02', '−7.08', '−2.99%', '#cfe8f6', '#6ab0d8'],
  ['PFC', '369.70', '−3.05', '−0.82%', '#eef1f8', '#2f4fa5'],
  ['IRCON', '162.30', '−2.91', '−1.76%', '#c0282d', '#e8a3a3'],
  ['PSU', '20,416.42', '−236.16', '−1.14%', '#f5c26b', '#3f9b46'],
  ['SJVN', '81.03', '−0.81', '−0.99%', '#0aa5e8', '#ffffff'],
  ['NTPC', '326.65', '0.05', '0.02%', '#0a74b8', '#9cd4ee'],
  ['JIOFIN', '303.55', '−4.80', '−1.56%', '#f6ead8', '#c08a3a'],
  ['NCC', '175.62', '−3.41', '−1.90%', '#1f2466', '#ffffff'],
  ['BEL', '416.35', '−6.65', '−1.57%', '#13a9ea', '#ffffff'],
  ['MANALI', '65.52', '−0.97', '−1.46%', '#e3efe7', '#2d8a56'],
  ['GAEL', '109.82', '−5.27', '−4.58%', '#edf3ed', '#2d6a46'],
  ['RTNIND', '43.88', '−1.06', '−2.36%', '#0e7a4a', '#ffffff'],
  ['KCP', '178.93', '−3.89', '−2.13%', '#f7efe4', '#c07a2a'],
];

const PERF: [string, string, string][] = [
  ['−9.01%', '1W', '#fcd6d9'], ['−20.98%', '1M', '#fac5c9'], ['−23.36%', '3M', '#fac5c9'],
  ['−20.52%', '6M', '#fac5c9'], ['−7.05%', 'YTD', '#fddde0'], ['−12.05%', '1Y', '#fac9cd'],
];

const TABS: [React.ReactNode, string][] = [
  [<TabIcon />, 'BANKNIFTY 58,867.70 ▼ −0.61'],
  [<TabIcon />, 'ETHUSDT 2,813.67 ▲ +1.57% U'],
  [<TabIcon />, 'BTCUSDT 87,191.94 ▲ +2.89%'],
  [<Favicon $bg="#000">X</Favicon>, '(4) Neeraj pathak (@Neerajpat'],
  [<Favicon $bg="#b9b3ac" $round />, 'Green potty baby reasons'],
  [<Favicon $bg="#f03">▸</Favicon>, '(1987) YouTube'],
  [<Favicon $bg="#29a3e2" $round>➤</Favicon>, 'TheDoji'],
  [<Favicon $bg="#6d6d6d" $round><Globe size={5} /></Favicon>, 'RTI Online ::'],
];

const signColor = (v: string) => (v.startsWith('−') ? DOWN : UP);

const App = () => (
  <Page>
    <GlobalStyle />
    <TabStrip>
      <TabMenu aria-label="Search tabs"><ChevronDown size={6} /></TabMenu>
      {TABS.map(([icon, title], i) => (
        <Tab key={title} $active={i === 2}>
          {icon}
          <TabTitle>{title}</TabTitle>
          <X size={5} strokeWidth={2.5} />
        </Tab>
      ))}
      <Plus size={6} />
      <Spacer />
      <WindowButtons>
        <Minus size={8} /><Copy size={7} /><X size={8} />
      </WindowButtons>
    </TabStrip>
    <AddressRow>
      <NavButtons>
        <ArrowLeft size={8} color="#806c7c" /><ArrowRight size={8} color="#806c7c" /><RotateCw size={8} /><House size={8} />
      </NavButtons>
      <UrlPill>
        <Settings2 size={7} />
        <UrlInput aria-label="Address" defaultValue="tradingview.com/chart/oVHVBnHt/?symbol=BINANCE%3ABTCUSDT" />
        <Star size={7} />
      </UrlPill>
      <Pinned>
        <Glyph d={G.zig} size={7} w={3} />
        <svg width={7} height={7} viewBox="0 0 14 14"><path d="M7 1L1 12H5Z" fill="#34a853" /><path d="M7 1L13 11H9L5 4Z" fill="#fbbc05" /><path d="M3 13L5 9H13L11 13Z" fill="#4285f4" /></svg>
        <Favicon $bg="#e5173f">↗</Favicon>
        <Puzzle size={7} />
      </Pinned>
      <Extensions>
        <Divider $color="#7a6676" />
        <Printer size={8} /><Key size={7} /><CreditCard size={8} /><Star size={8} /><Globe size={7} /><ScanSearch size={8} />
        <Languages size={8} /><QrCode size={7} /><SquareSplitVertical size={8} />
        <Divider $color="#7a6676" />
        <Download size={8} /><Favicon $bg="#7a8a3a" $round /><EllipsisVertical size={8} />
      </Extensions>
    </AddressRow>

    <TopBar>
      <Avatar>N<Badge /></Avatar>
      <TopGroup $gap={4}>
        <BarButton $strong><Search size={6} strokeWidth={3} />BTCUSDT</BarButton>
        <BarButton aria-label="Compare"><CirclePlus size={8} strokeWidth={1.5} /></BarButton>
        <Divider />
        <BarButton>1h</BarButton>
        <Divider />
        <BarButton aria-label="Chart style"><Glyph d={G.candle} size={8} w={1.8} /></BarButton>
        <Divider />
      </TopGroup>
      <TopGroup $gap={4}>
        <BarButton><Glyph d={G.indicator} size={8} w={1.8} />Indicators</BarButton>
        <ChevronDown size={5} />
        <BarButton aria-label="Templates"><LayoutGrid size={8} strokeWidth={1.5} /></BarButton>
        <Divider />
      </TopGroup>
      <TopGroup $gap={8}>
        <BarButton><AlarmClock size={8} strokeWidth={1.5} />Alert</BarButton>
        <BarButton><Rewind size={7} strokeWidth={1.8} />Replay</BarButton>
      </TopGroup>
      <TopGroup $gap={5}>
        <Divider />
        <BarButton aria-label="Undo"><Undo2 size={7} /></BarButton>
        <BarButton aria-label="Redo" $muted><Redo2 size={7} /></BarButton>
      </TopGroup>
      <Spacer />
      <TopGroup $gap={4}>
        <Square size={9} strokeWidth={1.3} />
        <BarButton>Unnamed copy</BarButton>
        <ChevronDown size={5} />
      </TopGroup>
      <TopGroup $gap={2}>
        <Dot>w</Dot>
        <Dot $dark>M</Dot>
      </TopGroup>
      <TopGroup $gap={5}>
        <Divider />
        <ScanSearch size={8} strokeWidth={1.5} />
        <Hexagon size={8} strokeWidth={1.5} />
        <Maximize size={8} strokeWidth={1.5} />
        <Camera size={9} strokeWidth={1.5} />
        <Publish>Publish</Publish>
      </TopGroup>
    </TopBar>

    <Workspace>
      <ToolRail aria-label="Drawing tools">
        <Tool $active aria-label="Cross"><Glyph d={G.cross} w={1.6} /></Tool>
        <Tool aria-label="Trend line"><Glyph d={G.trend} w={1.6} /></Tool>
        <Tool aria-label="Fibonacci"><Glyph d={G.fib} w={1.6} /></Tool>
        <Tool aria-label="Patterns"><Glyph d={G.pattern} w={1.6} /></Tool>
        <Tool aria-label="Forecast"><Glyph d={G.position} w={1.6} /></Tool>
        <Tool aria-label="Brush"><Glyph d={G.brush} w={1.6} /></Tool>
        <Tool aria-label="Text"><Type size={9} strokeWidth={1.3} /></Tool>
        <Tool aria-label="Icons"><Smile size={10} strokeWidth={1.3} /></Tool>
        <RailRule />
        <Tool aria-label="Measure"><Ruler size={10} strokeWidth={1.3} transform="rotate(90)" /></Tool>
        <Tool aria-label="Zoom in"><ZoomIn size={9} strokeWidth={1.5} /></Tool>
        <RailRule />
        <Tool aria-label="Magnet"><Magnet size={9} strokeWidth={1.5} transform="rotate(135)" /></Tool>
        <Tool aria-label="Keep drawing"><PencilRuler size={9} strokeWidth={1.5} /></Tool>
        <Tool aria-label="Lock"><LockOpen size={8} strokeWidth={1.6} /></Tool>
        <Tool aria-label="Hide"><Eye size={9} strokeWidth={1.5} /></Tool>
        <RailRule />
        <Tool aria-label="Remove"><Trash2 size={9} strokeWidth={1.5} /></Tool>
        <StarButton aria-label="Favourites"><Star size={8} strokeWidth={1.5} /></StarButton>
      </ToolRail>

      <ChartColumn>
        <PlotRow>
          <Plot>
            <PriceChart />
            <Legend>
              <LegendRow $h={8}>
                <BtcMark size={7} />
                <span>Bitcoin / TetherUS · 1h · Binance</span>
                <OpenDot />
                <Tinted $color={UP}>O86,746.52 H87,259.58 L86,704.28 C87,191.94 +445.43 (+0.51%)</Tinted>
              </LegendRow>
              <LegendRow $h={14}>
                <Quote $color={DOWN}>87,195.65<Side>SELL</Side></Quote>
                <span>0.01</span>
                <Quote $color="#2962ff">87,195.66<Side>BUY</Side></Quote>
              </LegendRow>
              <LegendRow $h={9} $veil><span>EMA 5 close</span><Tinted $color="#2962ff">86,875.43</Tinted></LegendRow>
              <LegendRow $h={8} $veil><span>EMA 200 close</span><Tinted $color={DOWN}>89,977.33</Tinted></LegendRow>
              <LegendRow $h={8}><span>Vol · BTC</span><Tinted $color={UP}>425</Tinted></LegendRow>
              <LegendRow $h={9}><Collapse aria-label="Collapse"><ChevronUp size={5} /></Collapse></LegendRow>
            </Legend>
            <FloatBar>
              {[
                'M9 5h1M9 12h1M9 19h1M15 5h1M15 12h1M15 19h1', G.trend, G.rect, G.hline, G.position, G.position, G.fib, G.brush,
                G.channel, G.note, G.ray, G.zig,
              ].map((d, i) => <Glyph key={i} d={d} w={1.5} />)}
            </FloatBar>
            <CrossAdd aria-label="Add at price"><CirclePlus size={5} /></CrossAdd>
          </Plot>
          <Axis>
            <Currency>USDT<ChevronDown size={4} /></Currency>
            {PRICES.map(([value, bg, h], i) => (
              <Price key={i} $bg={bg || undefined} $h={h} $dark={bg === AMBER}>
                {value && <span>{value}</span>}
                {h === 11 && bg && <span>15:26</span>}
              </Price>
            ))}
            <AxisGear aria-label="Axis settings"><Hexagon size={8} strokeWidth={1.5} /></AxisGear>
          </Axis>
        </PlotRow>
        <ClockRow>00:14:34 UTC+5:30</ClockRow>
        <PanelRow><ChevronUp size={8} strokeWidth={1.5} /><Maximize size={8} strokeWidth={1.5} /></PanelRow>
        <AdCard>
          <AdTop>
            <div>
              <AdTitle>Automate your Crypto Trading</AdTitle>
              <AdText>With TradingView &amp; Tradetron integrations,<br />automate Crypto F&amp;O strategies in just a few clicks<br />absolutely free</AdText>
            </div>
            <AdLogo>
              <Delta />
              <strong>Delta.</strong>
              <span>Exchange</span>
              <AdClose aria-label="Close"><X size={5} /></AdClose>
            </AdLogo>
          </AdTop>
          <DownloadButton>Download App</DownloadButton>
          <AdText $muted>Crypto products and NFTs are unregulated and can be highly risky.<br />There may be no regulatory recourse for any loss from such<br />transactions.</AdText>
          <AdTag>AD</AdTag>
        </AdCard>
      </ChartColumn>

      <SidePanel>
        <PanelHead>
          <PanelTitle>CAMODITY<ChevronDown size={4} /></PanelTitle>
          <Plus size={8} strokeWidth={1.5} /><Glyph d={G.columns} size={8} w={1.8} /><Ellipsis size={8} />
        </PanelHead>
        <WatchTable>
          <thead>
            <tr><HeadCell $w={32} $left>Symbol</HeadCell><HeadCell>Last</HeadCell><HeadCell $w={27}>Chg</HeadCell><HeadCell $w={29}>Chg%</HeadCell></tr>
          </thead>
          <tbody>
            {WATCH.map(([name, last, chg, pct, bg, fg]) => (
              <tr key={name}>
                <NameCell><NameWrap><Coin $bg={bg} $fg={fg} /><span>{name} •</span></NameWrap></NameCell>
                <Cell>{last}</Cell>
                <Cell $color={signColor(chg)}>{chg}</Cell>
                <Cell $color={signColor(pct)}>{pct}</Cell>
              </tr>
            ))}
          </tbody>
        </WatchTable>
        <Details>
          <DetailHead>
            <PanelTitle><BtcMark />BTCUSDT</PanelTitle>
            <LayoutGrid size={8} strokeWidth={1.5} /><SquarePen size={8} strokeWidth={1.5} /><Ellipsis size={8} />
          </DetailHead>
          <Line $h={6}>Bitcoin / TetherUS <SquareArrowOutUpRight size={5} /> · BINANCE</Line>
          <Line $h={8} $muted>Spot • Crypto</Line>
          <BigPrice>87,191.9<Tinted $color={DOWN}>4</Tinted><Unit>USDT</Unit></BigPrice>
          <Change>+2,452.20 +2.89%</Change>
          <Open><OpenDot />Market open</Open>
          <News href="#news">
            <Zap size={5} color="#673ab7" fill="#673ab7" />
            <NewsText>43 minutes ago · Bitcoin Local Bottom To<br />Fall Between These Two Levels - Analyst</NewsText>
            <ChevronRight size={5} />
          </News>
          <SubTitle $h={9}>Key stats</SubTitle>
          <Stat><span>Volume</span><strong>15.12 K</strong></Stat>
          <Stat><span>Average Volume (30D)</span><strong>26.24 K</strong></Stat>
          <SubTitle $h={20}>Performance</SubTitle>
          <PerfGrid>
            {PERF.map(([v, label, bg]) => (
              <PerfCell key={label} $bg={bg}>{v}<Period>{label}</Period></PerfCell>
            ))}
          </PerfGrid>
          <SubTitle $h={14}>Seasonals</SubTitle>
          <Seasonals />
        </Details>
      </SidePanel>

      <IconRail aria-label="Panels">
        <RailButton $tone="on" aria-label="Watchlist"><Glyph d={G.list} size={9} w={1.8} /></RailButton>
        <RailButton aria-label="Alerts"><AlarmClock size={10} strokeWidth={1.3} /></RailButton>
        <RailButton aria-label="Object tree"><Layers size={10} strokeWidth={1.3} /></RailButton>
        <RailButton aria-label="Chats"><MessagesSquare size={10} strokeWidth={1.3} /></RailButton>
        <Spacer />
        <RailButton aria-label="Screener"><Radar size={10} strokeWidth={1.3} /></RailButton>
        <RailButton aria-label="Calendar"><Calendar size={10} strokeWidth={1.3} /></RailButton>
        <RailButton aria-label="News"><Rss size={10} strokeWidth={1.3} /></RailButton>
        <RailButton aria-label="Notifications"><Bell size={10} strokeWidth={1.3} /></RailButton>
        <RailButton $tone="dark" aria-label="Products">
          <svg width={8} height={8} viewBox="0 0 8 8"><path d="M1 1.500h1M3.500 1.500h1M6 1.500h1M1 4h1M3.500 4h1M6 4h1M1 6.500h1M3.500 6.500h1M6 6.500h1" stroke="#fff" strokeWidth={1.2} /></svg>
        </RailButton>
        <RailRule />
        <RailButton aria-label="Help"><CircleHelp size={10} strokeWidth={1.3} /></RailButton>
      </IconRail>
    </Workspace>

    <Taskbar>
      <Trend>
        <TrendIcon><Badge /></TrendIcon>
        <span><strong>Trending videos</strong><br />Stranger Things…</span>
      </Trend>
      <TaskApps>
        <svg width={9} height={9} viewBox="0 0 9 9"><path d="M0 0h4v4H0ZM5 0h4v4H5ZM0 5h4v4H0ZM5 5h4v4H5Z" fill="#4cc2ff" /></svg>
        <TaskSearch>
          <Search size={6} strokeWidth={3} />
          <SearchInput aria-label="Search" placeholder="Search" />
          <svg width={12} height={9} viewBox="0 0 24 18"><path d="M2 10C2 4 8 1 12 4C16 0 23 4 22 9C22 15 16 18 12 15C7 18 2 15 2 10Z" fill="#6c9a5c" /><path d="M5 8l4 3l3-5l4 6l4-5" stroke="#3d6437" strokeWidth={2} fill="none" /></svg>
        </TaskSearch>
        {APPS.map((art, i) => <svg key={i} width={10} height={10} viewBox="0 0 20 20">{art}</svg>)}
      </TaskApps>
      <Tray>
        <ChevronUp size={6} />
        <TrayText $center>ENG<br />IN</TrayText>
        <Monitor size={7} /><Volume2 size={7} />
        <TrayText>12:14 AM<br />11/24/2025</TrayText>
      </Tray>
    </Taskbar>
  </Page>
);

export default App;
